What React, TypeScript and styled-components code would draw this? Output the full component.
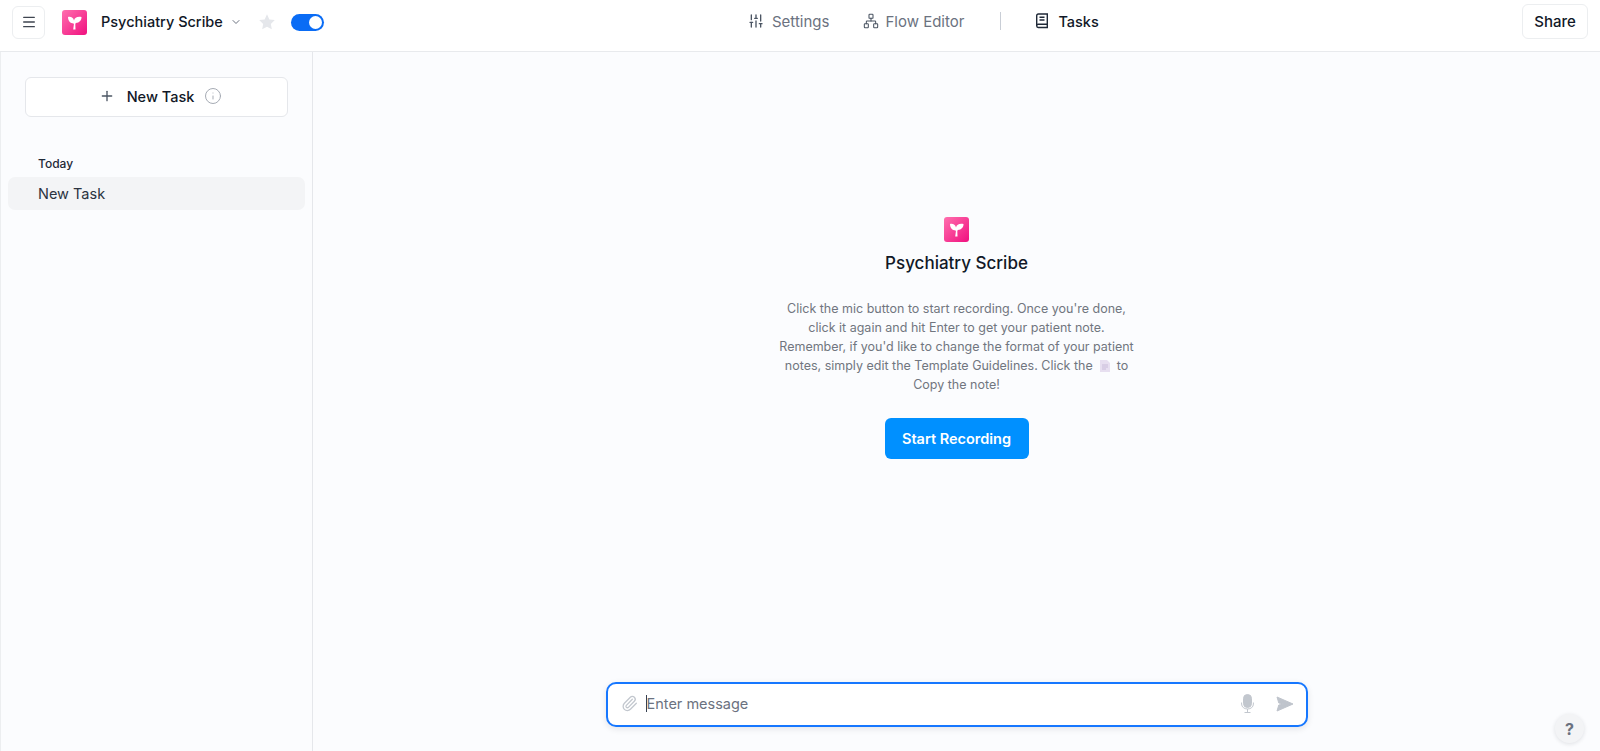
import styled, { createGlobalStyle } from "styled-components";
import { ChevronDown, Info, Menu, Network, Paperclip, Plus, SlidersVertical } from "lucide-react";

const GlobalStyle = createGlobalStyle`
  * { box-sizing: border-box; }
  html, body { margin: 0; padding: 0; height: 100%; }
  body { font-family: Inter, "Liberation Sans", sans-serif; background: #fff; overflow: hidden; }
`;

const Page = styled.div`
  display: flex;
  flex-direction: column;
  height: 751px;
  position: relative;
`;

const Header = styled.header`
  display: grid;
  grid-template-columns: 736px auto 1fr;
  align-items: center;
  height: 52px;
  padding: 4px 12px 11px;
  border-bottom: 1px solid #e8eaed;
  background: #fff;
`;

const LeftGroup = styled.div`
  display: flex;
  align-items: center;
`;

const IconButton = styled.button`
  display: flex;
  align-items: center;
  justify-content: center;
  width: 33px;
  height: 33px;
  margin-right: 17px;
  padding: 0;
  background: #fff;
  border: 1px solid #eceef0;
  border-radius: 6px;
  color: #3f4550;
`;

const Title = styled.span`
  margin-left: 14px;
  padding-bottom: 1px;
  font-size: 14.5px;
  font-weight: 450;
  color: #111827;
  white-space: nowrap;
`;

const Toggle = styled.div`
  display: flex;
  justify-content: flex-end;
  align-items: center;
  width: 33px;
  height: 17px;
  margin-left: 15px;
  padding-right: 2px;
  border-radius: 9px;
  background: #0a6cf5;
`;

const Knob = styled.div`
  width: 13px;
  height: 13px;
  border-radius: 50%;
  background: #fff;
`;

const CenterNav = styled.nav`
  display: flex;
  align-items: center;
  padding-bottom: 2px;
`;

const NavItem = styled.div<{ $active?: boolean; $gap: number; $after?: number }>`
  display: flex;
  align-items: center;
  gap: ${(p) => p.$gap}px;
  margin-right: ${(p) => p.$after ?? 0}px;
  font-size: ${(p) => (p.$active ? 14.5 : 15)}px;
  font-weight: ${(p) => (p.$active ? 450 : 400)};
  color: ${(p) => (p.$active ? "#111827" : "#6b7280")};
  white-space: nowrap;
`;

const NavDivider = styled.div`
  width: 1px;
  height: 18px;
  margin: 0 34px 0 36px;
  background: #c9ced6;
`;

const ShareButton = styled.button`
  justify-self: end;
  width: 66px;
  height: 35px;
  margin-bottom: 1px;
  padding: 0 0 1px;
  background: #fff;
  border: 1px solid #eceef0;
  border-radius: 6px;
  font-family: inherit;
  font-size: 15px;
  font-weight: 450;
  color: #111827;
`;

const Body = styled.div`
  flex: 1;
  display: flex;
  min-height: 0;
`;

const Sidebar = styled.aside`
  display: flex;
  flex-direction: column;
  width: 313px;
  padding: 25px 8px 0;
  background: #fbfcfe;
  border-left: 1px solid #eceef0;
  border-right: 1px solid #e5e7eb;
`;

const NewTaskButton = styled.button`
  display: flex;
  align-items: center;
  justify-content: center;
  width: 263px;
  height: 40px;
  margin-left: 16px;
  padding: 0 0 2px 8px;
  background: #fff;
  border: 1px solid #e5e7eb;
  border-radius: 6px;
  font-family: inherit;
  font-size: 14.5px;
  font-weight: 450;
  color: #111827;
`;

const NewTaskLabel = styled.span`
  margin: 0 10px 0 12px;
`;

const SectionLabel = styled.div`
  margin: 39px 0 0 29px;
  font-size: 12px;
  line-height: 16px;
  font-weight: 500;
  color: #1f2937;
`;

const TaskRow = styled.div`
  display: flex;
  align-items: center;
  height: 33px;
  width: 297px;
  margin-top: 5px;
  margin-left: -1px;
  padding: 0 0 1px 30px;
  border-radius: 7px;
  background: #f3f4f6;
  font-size: 14.5px;
  color: #2b3340;
`;

const Main = styled.main`
  flex: 1;
  display: flex;
  flex-direction: column;
  align-items: center;
  background: #fbfcfe;
`;

const Hero = styled.section`
  flex: 1;
  display: flex;
  flex-direction: column;
  align-items: center;
  padding-top: 165px;
`;

const HeroTitle = styled.h1`
  margin: 9px 0 0;
  font-size: 17px;
  line-height: 24px;
  font-weight: 500;
  color: #111827;
`;

const HeroText = styled.p`
  width: 364px;
  margin: 25px 0 0;
  font-size: 12.5px;
  line-height: 18.9px;
  text-align: center;
  color: #71767f;
`;

const InlineDoc = styled.svg`
  vertical-align: -2px;
  margin: 0 7px;
`;

const RecordButton = styled.button`
  width: 144px;
  height: 41px;
  margin-top: 23px;
  background: #0090ff;
  border: none;
  border-radius: 6px;
  font-family: inherit;
  font-size: 14.5px;
  font-weight: 600;
  color: #fff;
`;

const Composer = styled.div`
  display: flex;
  align-items: center;
  width: 702px;
  height: 45px;
  margin-bottom: 24px;
  padding: 0 12px 2px 13px;
  background: #fff;
  border: 2px solid #1677ff;
  border-radius: 10px;
  box-shadow: 0 2px 6px rgba(17, 24, 39, 0.1);
  color: #c2c7ce;
`;

const Caret = styled.span`
  width: 1px;
  height: 17px;
  margin-left: 8px;
  background: #374151;
`;

const Placeholder = styled.span`
  flex: 1;
  font-size: 14.5px;
  color: #6b7280;
`;

const HelpButton = styled.button`
  position: absolute;
  right: 16px;
  bottom: 8px;
  width: 29px;
  height: 29px;
  padding: 0;
  background: #f3f4f6;
  border: none;
  border-radius: 50%;
  box-shadow: 0 1px 4px rgba(17, 24, 39, 0.12);
  font-family: inherit;
  font-size: 16px;
  font-weight: 700;
  color: #6b7280;
`;

const Logo = ({ gradientId }: { gradientId: string }) => (
  <svg width="25" height="25" viewBox="0 0 25 25">
    <defs>
      <linearGradient id={gradientId} x1="0" y1="0" x2="1" y2="1">
        <stop offset="0" stopColor="#ff6fae" />
        <stop offset="1" stopColor="#f0107f" />
      </linearGradient>
    </defs>
    <rect width="25" height="25" rx="3" fill={`url(#${gradientId})`} />
    <path
      d="M6 7c3-.6 5.300.7 6 3.400C12.700 7.600 15.200 6.300 19.500 7c.1 3.300-1.900 5.700-5.800 6l-.4 1.500.2 5h-2.300l.7-5.200-.3-.8C8.300 13.300 6.100 11 6 7z"
      fill="#fff"
    />
  </svg>
);

const StarIcon = () => (
  <svg width="18" height="18" viewBox="0 0 24 24" style={{ marginLeft: 16 }}>
    <path
      d="M12 1.800l3.150 6.700 7.250.95-5.300 5.050 1.350 7.200L12 18.200l-6.450 3.500 1.350-7.200-5.300-5.050 7.250-.95z"
      fill="#e5e7eb"
    />
  </svg>
);

const BookIcon = () => (
  <svg width="14" height="16" viewBox="0 0 14 16" fill="none" stroke="#1f2937" strokeWidth="1.400">
    <path d="M1.700 12.800V2.700c0-1 .6-1.700 1.700-1.700h8.900v10.300H3.200c-1 0-1.500.7-1.500 1.500s.5 1.700 1.500 1.700h9.100v-3" />
    <path d="M4.500 4.300h5M4.500 7h5" />
  </svg>
);

const MicIcon = () => (
  <svg width="13" height="19" viewBox="0 0 13 19" fill="none" stroke="#c2c7ce" strokeWidth="1">
    <rect x="2.500" y="0.500" width="8" height="13" rx="4" fill="#c2c7ce" />
    <path d="M.6 8.500v1.500c0 3 2.600 5 5.900 5s5.900-2 5.900-5V8.500M6.500 15v3.500M3.500 18.500h6" />
  </svg>
);

const SendIcon = () => (
  <svg width="18" height="16" viewBox="0 0 18 16" style={{ marginLeft: 22 }}>
    <path
      d="M1 1L17 8 1 15l1.800-6 5.500-1-5.500-1z"
      fill="#bfc4cc"
      stroke="#bfc4cc"
      strokeWidth="1"
      strokeLinejoin="round"
    />
  </svg>
);

export default function App() {
  return (
    <>
      <GlobalStyle />
      <Page>
        <Header>
          <LeftGroup>
            <IconButton>
              <Menu size={16} strokeWidth={2} />
            </IconButton>
            <Logo gradientId="logo-top" />
            <Title>Psychiatry Scribe</Title>
            <ChevronDown size={12} color="#6b7280" style={{ marginLeft: 7 }} />
            <StarIcon />
            <Toggle>
              <Knob />
            </Toggle>
          </LeftGroup>
          <CenterNav>
            <NavItem $gap={8} $after={34}>
              <SlidersVertical size={16} strokeWidth={2} color="#4b5563" />
              Settings
            </NavItem>
            <NavItem $gap={6}>
              <Network size={16} strokeWidth={1.6} color="#4b5563" />
              Flow Editor
            </NavItem>
            <NavDivider />
            <NavItem $active $gap={9}>
              <BookIcon />
              Tasks
            </NavItem>
          </CenterNav>
          <ShareButton>Share</ShareButton>
        </Header>
        <Body>
          <Sidebar>
            <NewTaskButton>
              <Plus size={16} strokeWidth={2} color="#4b5563" />
              <NewTaskLabel>New Task</NewTaskLabel>
              <Info size={18} strokeWidth={1.300} color="#a3a9b2" />
            </NewTaskButton>
            <SectionLabel>Today</SectionLabel>
            <TaskRow>New Task</TaskRow>
          </Sidebar>
          <Main>
            <Hero>
              <Logo gradientId="logo-hero" />
              <HeroTitle>Psychiatry Scribe</HeroTitle>
              <HeroText>
                Click the mic button to start recording. Once you're done, click it again and hit Enter to get your
                patient note. Remember, if you'd like to change the format of your patient notes, simply edit the
                Template Guidelines. Click the
                <InlineDoc width="10" height="12" viewBox="0 0 10 12">
                  <path d="M0 0h7l3 3v9H0z" fill="#e7dff0" />
                  <path d="M2 5h6M2 7h6M2 9h4" stroke="#c9bcd9" strokeWidth="1" />
                </InlineDoc>
                to Copy the note!
              </HeroText>
              <RecordButton>Start Recording</RecordButton>
            </Hero>
            <Composer>
              <Paperclip size={17} strokeWidth={1.800} />
              <Caret />
              <Placeholder>Enter message</Placeholder>
              <MicIcon />
              <SendIcon />
            </Composer>
          </Main>
        </Body>
        <HelpButton>?</HelpButton>
      </Page>
    </>
  );
}
